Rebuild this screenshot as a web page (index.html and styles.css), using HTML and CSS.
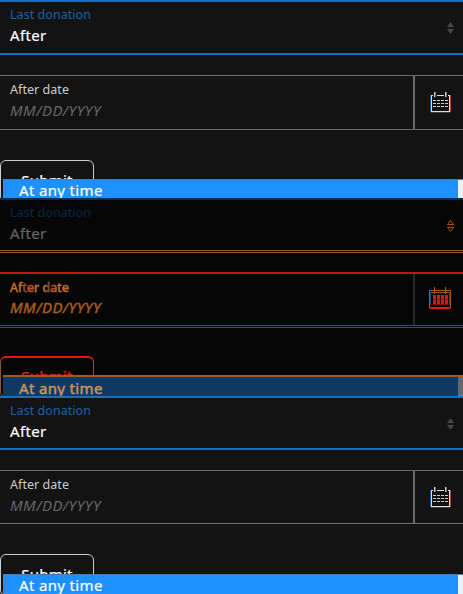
FILE: index.html
```html
<!DOCTYPE html>
<html lang="en">
<head>
<meta charset="utf-8">
<title>Last donation</title>
<link rel="stylesheet" href="styles.css">
</head>
<body>
<svg width="0" height="0" class="defs">
  <symbol id="sort" viewBox="0 0 7 12"><path d="M3.5 0L7 5H0zM0 7h7L3.5 12z"/></symbol>
  <symbol id="calendar" viewBox="0 0 24 22">
    <path class="frame" d="M2.5 4.5h18v16h-18z"/>
    <path class="left" d="M1.5 4v17"/><path class="right" d="M21.5 4v17"/>
    <path class="gap" d="M4 4.5h4M15 4.5h4"/>
    <path class="rings" d="M5.5 1v5M16.5 1v5"/>
    <path class="rings-edge" d="M6.5 1v5M17.5 1v5"/>
    <path class="days" d="M4 9.5h15M4 12.5h15M4 15.5h15"/>
    <path class="shade" d="M2 21.5h19"/>
  </symbol>
</svg>

<section class="panel">
  <div class="field select"><div class="copy"><div class="label">Last donation</div><div class="value">After</div></div><svg class="sort"><use href="#sort"/></svg></div>
  <div class="field date"><div class="copy"><div class="label">After date</div><div class="hint">MM/DD/YYYY</div></div><div class="picker"><svg class="calendar"><use href="#calendar"/></svg></div></div>
  <button class="submit">Submit</button>
  <div class="menu"><div class="option">At any time</div><div class="scroll"></div></div>
</section>

<section class="panel diff">
  <div class="field select"><div class="copy"><div class="label">Last donation</div><div class="value">After</div></div><svg class="sort" viewBox="0 0 7 12"><path d="M3.5 .5L6.5 4.5h-6zM.5 7.5h6l-3 4z"/></svg></div>
  <div class="field date"><div class="copy"><div class="label">After date</div><div class="hint">MM/DD/YYYY</div></div><div class="picker"><svg class="calendar" viewBox="0 0 24 22">
    <path class="edge" d="M.5 3v17M21.5 3v17M1 3.5h20M1 5.5h20"/>
    <path class="blue" d="M1.5 5v13M20.5 5v13"/>
    <path class="rings" d="M5.5 0v7M16.5 0v7"/>
    <path class="days" d="M4 10h15M4 15h15"/>
    <path class="line" d="M4 12.5h15M4 17.5h15"/>
    <path class="base" d="M0 20.5h22M1 21.5h20"/>
  </svg></div></div>
  <button class="submit">Submit</button>
  <div class="menu"><div class="option">At any time</div><div class="scroll"></div></div>
</section>

<section class="panel last">
  <div class="field select"><div class="copy"><div class="label">Last donation</div><div class="value">After</div></div><svg class="sort"><use href="#sort"/></svg></div>
  <div class="field date"><div class="copy"><div class="label">After date</div><div class="hint">MM/DD/YYYY</div></div><div class="picker"><svg class="calendar"><use href="#calendar"/></svg></div></div>
  <button class="submit">Submit</button>
  <div class="menu"><div class="option">At any time</div><div class="scroll"></div></div>
</section>
</body>
</html>
```
FILE: styles.css
```css
* { box-sizing: border-box; }
body { margin: 0; background: #131313; font-family: "Noto Sans", sans-serif; overflow: hidden; }
.defs { position: absolute; }
.panel { position: relative; height: 198px; overflow: hidden; background: #131313; display: flow-root; }
.field { display: flex; }
.copy { flex: 1; padding-left: 10px; white-space: nowrap; }
.select { height: 55px; border-top: 2px solid #1a6fbd; border-bottom: 2px solid #1a6fbd; padding-top: 4px; }
.label { font-size: 12.5px; line-height: 18px; letter-spacing: .05px; color: #ccc; }
.select .label { color: #1962ad; }
.value { font-size: 15px; line-height: 22px; letter-spacing: .35px; color: #fff; -webkit-text-stroke: .2px; }
.sort { width: 7px; height: 12px; margin: 16px 9px 0 0; fill: #484848; }
.date { height: 55px; margin-top: 20px; border-top: 1px solid #696b70; border-bottom: 1px solid #696b70; }
.date .copy { padding-top: 5px; }
.hint { font-size: 15px; line-height: 22px; letter-spacing: .45px; font-style: italic; color: #64676b; }
.picker { width: 50px; border-left: 2px solid #696b70; padding: 15px 0 0 14px; }
.calendar { display: block; width: 24px; height: 22px; fill: none; stroke-width: 1; shape-rendering: crispEdges; }
.frame { stroke: #ddd; }
.left { stroke: #125b9e; }
.right { stroke: #995322; }
.gap { stroke: #131313; }
.rings { stroke: #b9d0e0; }
.rings-edge { stroke: #8a6544; }
.days { stroke: #ccc; stroke-dasharray: 3 1; }
.shade { stroke: #444; }
.submit { display: block; width: 94px; height: 42px; margin: 30px 0 0; padding: 0 0 2px; border: 1px solid #ccc; border-radius: 6px; background: transparent; color: #fff; font: 15px "Noto Sans", sans-serif; letter-spacing: .25px; -webkit-text-stroke: .2px; }
.menu { position: absolute; left: 3px; right: 0; bottom: 0; height: 19px; display: flex; background: #1e90ff; border-top: 1px solid #4b7cae; overflow: hidden; }
.option { flex: 1; padding-left: 16px; font-size: 15px; letter-spacing: .35px; line-height: 20px; color: #fff; -webkit-text-stroke: .2px; }
.scroll { width: 5px; background: #f1f1f1; }

.diff { background: #060606; }
.diff .select { height: 55px; border-top-color: #0a2c4b; border-bottom: 3px double #a05a18; }
.diff .select .label { color: #0a2745; }
.diff .value { color: #666; }
.diff .sort { fill: none; stroke: #a85208; stroke-linejoin: bevel; }
.diff .date { height: 56px; margin-top: 19px; border-top: 2px solid #cc1313; border-bottom: 3px double #cc1313; }
.diff .date .copy { padding-top: 5px; }
.diff .date .label { background: repeating-linear-gradient(90deg, #c9782b 0 13px, #354351 13px 17px, #d83b20 17px 23px); background-clip: text; color: transparent; }
.diff .date .label, .diff .hint { -webkit-text-stroke: .4px #b46219; }
.diff .hint { color: #a05a20; line-height: 21px; }
.diff .picker { border-color: #29292b; padding-top: 13px; }
.diff .edge, .diff .rings { stroke: #a65b1d; }
.diff .blue { stroke: #164a73; }
.diff .days { stroke: #e31313; stroke-width: 4; stroke-dasharray: 3 1; }
.diff .line { stroke: #940909; }
.diff .base { stroke: #e51a16; }
.diff .submit { margin-top: 28px; padding-bottom: 3px; border-color: #8b5a35; border-top: 2px solid #e51212; color: #e51515; -webkit-text-stroke: .5px #c92010; }
.diff .menu { height: 21px; border-top: 2px solid #9c5b21; background: #0f3965; }
.diff .option { color: #ce9355; -webkit-text-stroke: .5px #ce9355; line-height: 22px; }
.diff .scroll { background: #666; border-bottom: 1px solid #ba762b; }
.last .select { height: 54px; padding-top: 4px; }
.last .date { height: 54px; }
.last .menu { height: 20px; }
.last .option { line-height: 21px; }
```
